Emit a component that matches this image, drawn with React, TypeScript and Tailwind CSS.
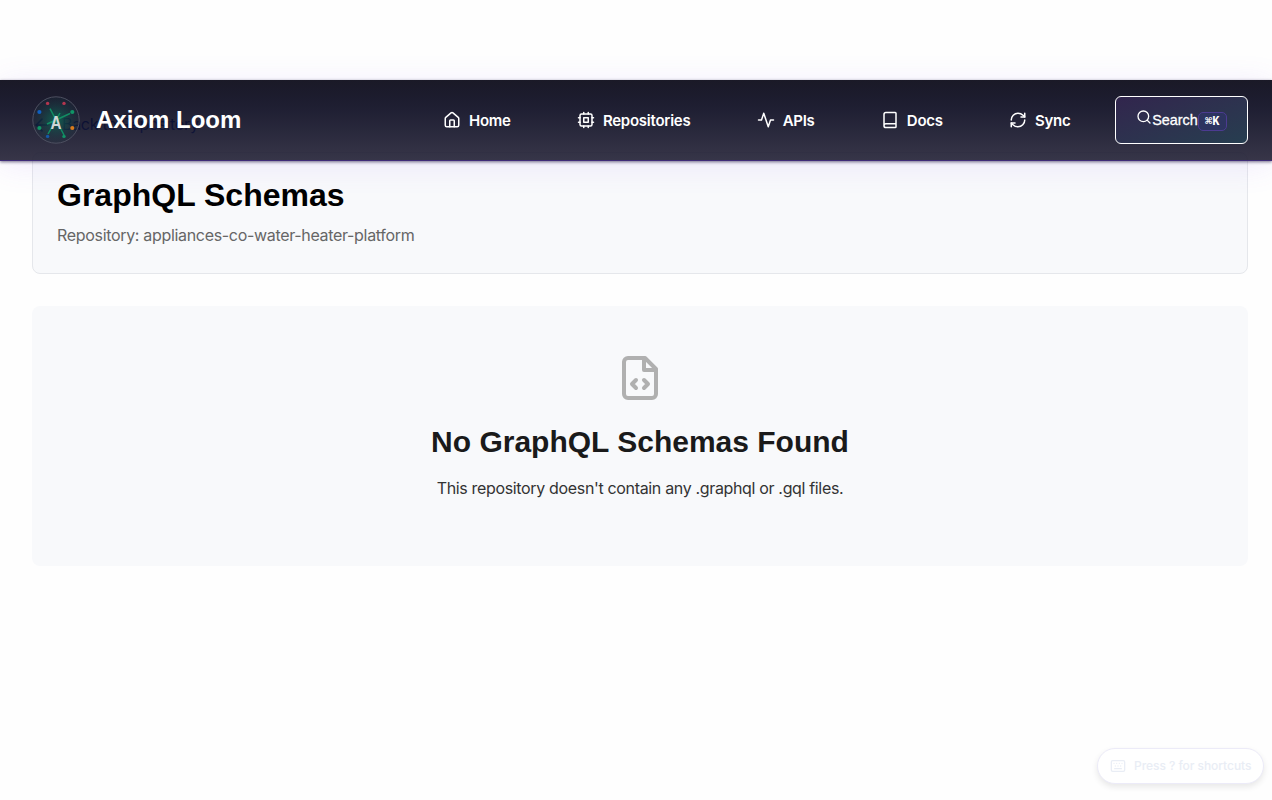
import type { ReactNode } from "react";
import { ArrowLeft, Book, House, Keyboard, RefreshCw, Search } from "lucide-react";

function Stroke({ size, className, children }: { size: number; className?: string; children: ReactNode }) {
  return (
    <svg width={size} height={size} viewBox="0 0 24 24" fill="none" stroke="currentColor" strokeWidth="2" strokeLinecap="round" strokeLinejoin="round" className={className}>
      {children}
    </svg>
  );
}

const links = [
  { label: "Home", icon: <House size={18} /> },
  {
    label: "Repositories",
    icon: (
      <Stroke size={18}>
        <rect x="4" y="4" width="16" height="16" rx="2" />
        <rect x="9" y="9" width="6" height="6" />
        <path d="M15 2v2M15 20v2M2 15h2M2 9h2M20 15h2M20 9h2M9 2v2M9 20v2" />
      </Stroke>
    ),
  },
  { label: "APIs", icon: <Stroke size={18}><path d="M22 12h-4l-3 9L9 3l-3 9H2" /></Stroke> },
  { label: "Docs", icon: <Book size={18} /> },
  { label: "Sync", icon: <RefreshCw size={18} /> },
];

const dots = [
  [15.6, 7.4, 1.7, "#b5364f"], [32, 7.4, 1.7, "#b5364f"], [40.3, 16, 2.1, "#109566"], [40.3, 32, 2.1, "#d97b1c"],
  [32, 40.4, 1.7, "#109566"], [15.6, 40.4, 1.7, "#1559a8"], [7.4, 32, 2.1, "#109566"], [7.4, 16, 2.1, "#0f5fc0"],
] as const;

function Logo() {
  return (
    <svg width="48" height="48" viewBox="0 0 48 48" className="shrink-0">
      <defs>
        <radialGradient id="glow">
          <stop offset="0" stopColor="#08775a" stopOpacity=".75" />
          <stop offset=".5" stopColor="#12514c" stopOpacity=".5" />
          <stop offset="1" stopColor="#1c3340" stopOpacity=".2" />
        </radialGradient>
      </defs>
      <circle cx="24" cy="24" r="23.2" fill="url(#glow)" stroke="#4d5060" />
      <path d="M24 24 18 12.7M24 24 38 17.5M24 24 16 38M24 24 32 39M24 24 15 28M24 24 28 17" stroke="#128d63" strokeWidth="1.5" />
      {dots.map(([x, y, r, color]) => <circle key={`${x}-${y}`} cx={x} cy={y} r={r} fill={color} />)}
      <text x="24" y="33" textAnchor="middle" className="fill-[#d0d5d6] font-['Liberation_Sans'] text-[19px] font-bold" textLength="11" lengthAdjust="spacingAndGlyphs">A</text>
    </svg>
  );
}

export default function App() {
  return (
    <div className="relative h-[800px] w-full overflow-hidden bg-[#fefefe] font-['Inter',sans-serif] text-[#1a1a1a]">
      <main className="flex flex-col pt-[112px] pr-6 pl-8">
        <a className="flex h-[26px] items-center gap-[10px] text-[16px] leading-[24px] tracking-[-0.3px] text-[#0037d0]">
          <ArrowLeft size={20} />
          <span className="-mt-[2px]">Back to Repository</span>
        </a>
        <section className="mt-[14px] h-[122px] rounded-lg border border-[#e5e7eb] bg-[#f8f9fb] px-6 pt-[23px]">
          <h1 className="font-['Liberation_Sans',sans-serif] text-[32px] leading-[38px] font-bold text-black">GraphQL Schemas</h1>
          <p className="mt-[9px] text-[16px] leading-[24px] tracking-[-0.32px] text-[#666]">Repository: appliances-co-water-heater-platform</p>
        </section>
        <section className="mt-8 flex h-[260px] flex-col items-center rounded-lg bg-[#f8f9fb] pt-12">
          <Stroke size={48} className="text-[#b0b0b0]">
            <path d="M14.5 2H6a2 2 0 0 0-2 2v16a2 2 0 0 0 2 2h12a2 2 0 0 0 2-2V7.5L14.5 2z" />
            <path d="M14 2v6h6M10 13l-2 2 2 2M14 17l2-2-2-2" />
          </Stroke>
          <h2 className="mt-[21px] font-['Liberation_Sans',sans-serif] text-[30px] leading-[38px] font-bold">No GraphQL Schemas Found</h2>
          <p className="mt-[15px] text-[16px] leading-[24px] tracking-[-0.34px] text-[#333]">This repository doesn't contain any .graphql or .gql files.</p>
        </section>
      </main>

      <header className="absolute inset-x-0 top-20 flex h-[81px] items-center border-b border-[#3f2c78] bg-linear-to-b from-[#01000f]/90 to-[#211f34]/90 pr-6 pl-8 shadow-[0_1px_3px_rgba(30,20,60,0.6),0_4px_32px_rgba(139,92,246,0.12)]">
        <div className="flex w-[411px] items-center gap-4">
          <Logo />
          <span className="font-['Liberation_Sans',sans-serif] text-[24px] leading-9 font-bold text-white">Axiom Loom</span>
        </div>
        <nav className="flex flex-1 items-center gap-[66.2px]">
          {links.map(({ label, icon }) => (
            <a key={label} className="flex items-center gap-2 text-[15px] leading-6 font-semibold tracking-[-0.25px] text-white">
              {icon}
              <span className="relative top-px">{label}</span>
            </a>
          ))}
        </nav>
        <button className="flex h-12 w-[133px] items-center justify-center rounded-md border border-white bg-linear-to-br from-[#31254d] to-[#263e50] text-white">
          <Search size={16} className="mb-[6px]" />
          <span className="mt-[2px] font-['Liberation_Sans',sans-serif] text-[14.4px] [-webkit-text-stroke:0.3px_white]">Search</span>
          <kbd className="mt-[3px] flex h-[19px] w-[29px] items-center justify-center rounded-[5px] border border-[#4c3b91] bg-[#2d3460] font-['Liberation_Mono',monospace] text-[12px] font-bold">⌘K</kbd>
        </button>
      </header>

      <div className="absolute right-2 bottom-4 flex h-9 w-[167px] items-center gap-2 rounded-full border border-[#ecebf8] bg-white pl-3 text-[12px] font-medium tracking-[-0.05px] text-[#e9edf5] shadow-[0_3px_6px_rgba(0,0,0,0.09)]">
        <Keyboard size={16} />
        <span>Press ? for shortcuts</span>
      </div>
    </div>
  );
}
